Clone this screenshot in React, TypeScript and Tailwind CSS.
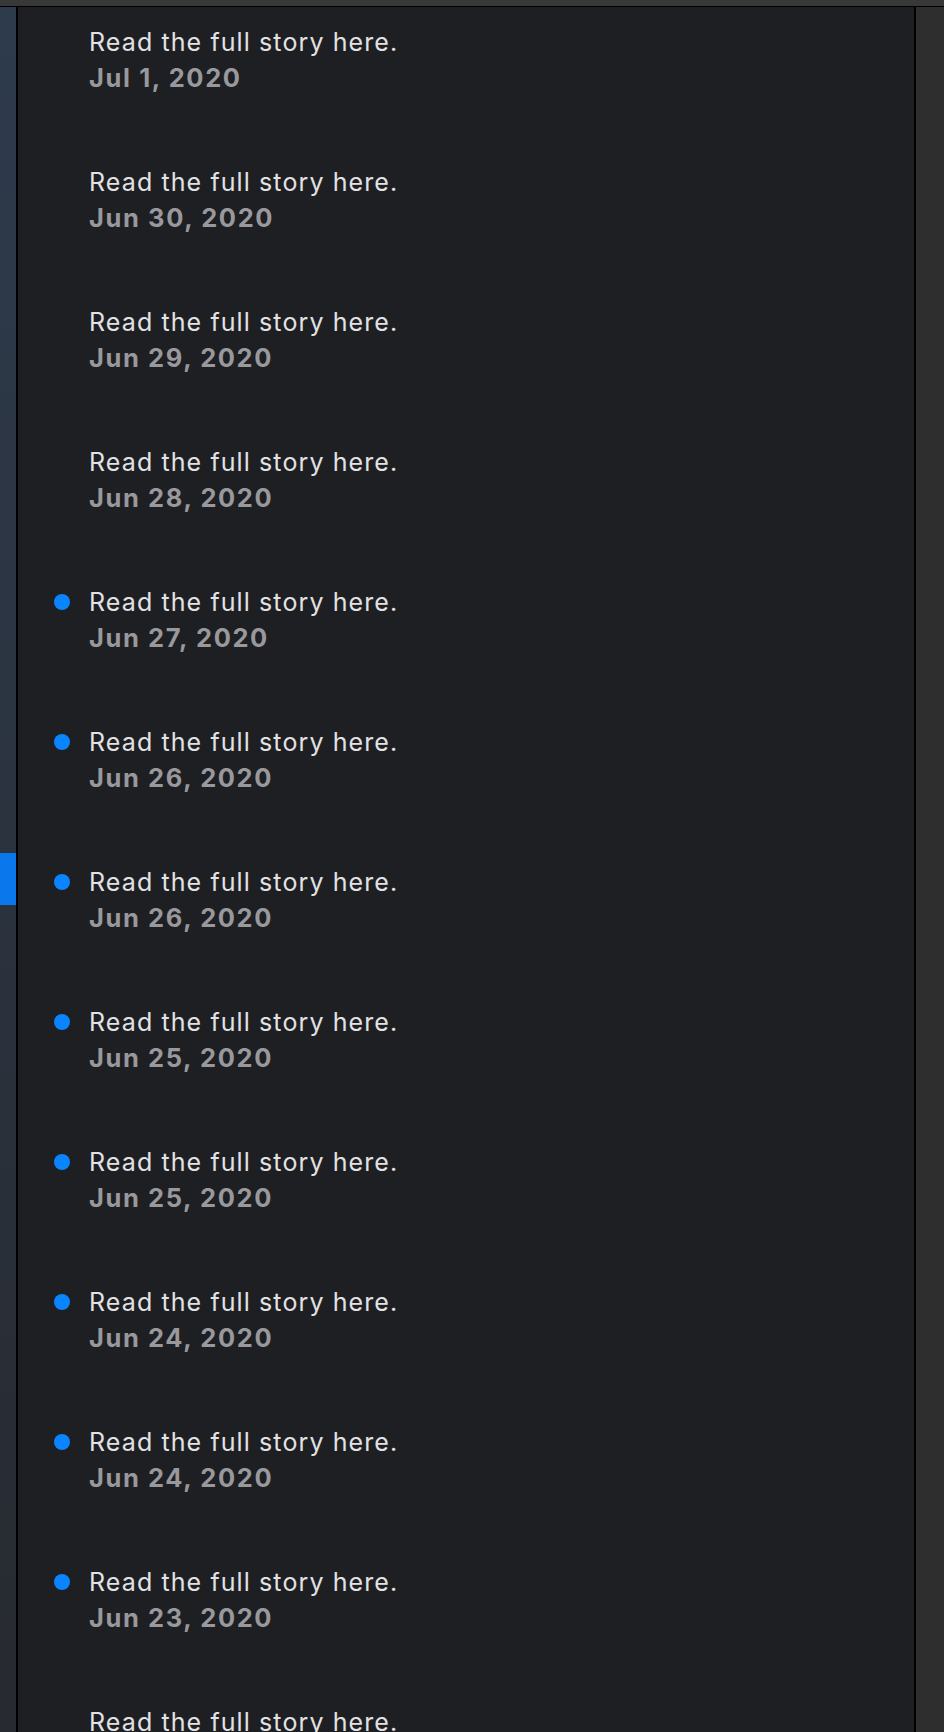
const ITEMS = [
  { date: "Jul 1, 2020", unread: false },
  { date: "Jun 30, 2020", unread: false },
  { date: "Jun 29, 2020", unread: false },
  { date: "Jun 28, 2020", unread: false },
  { date: "Jun 27, 2020", unread: true },
  { date: "Jun 26, 2020", unread: true },
  { date: "Jun 26, 2020", unread: true },
  { date: "Jun 25, 2020", unread: true },
  { date: "Jun 25, 2020", unread: true },
  { date: "Jun 24, 2020", unread: true },
  { date: "Jun 24, 2020", unread: true },
  { date: "Jun 23, 2020", unread: true },
  { date: "Jun 23, 2020", unread: false },
];

function StoryRow({ date, unread }: { date: string; unread: boolean }) {
  return (
    <div className="flex h-[140px] shrink-0 pl-[36px]">
      <div className="flex h-[34px] w-[16px] items-center">
        {unread && <span className="h-[16px] w-[16px] rounded-full bg-[#0a84ff]" />}
      </div>
      <div className="ml-[19px] flex flex-col">
        <span className="text-[25px] leading-[34px] tracking-[1.1px] text-[#e2e2e4]">Read the full story here.</span>
        <span className="text-[25.5px] font-bold leading-[38px] tracking-[1.6px] text-[#98989d]">{date}</span>
      </div>
    </div>
  );
}

export default function App() {
  return (
    <div className="flex h-[1732px] w-[944px] flex-col overflow-hidden bg-[#1e1f22] font-['Inter',sans-serif]">
      <div className="h-[7px] shrink-0 border-b border-black bg-[#383839]" />
      <div className="flex min-h-0 flex-1">
        <div className="flex w-[18px] shrink-0 flex-col border-r-2 border-black bg-gradient-to-b from-[#2e3b4d] to-[#272a30]">
          <div className="mt-[846px] h-[52px] bg-[#0a78ec]" />
        </div>
        <div className="flex min-w-0 flex-1 flex-col overflow-hidden pt-[18px]">
          {ITEMS.map((item, i) => (
            <StoryRow key={i} date={item.date} unread={item.unread} />
          ))}
        </div>
        <div className="w-[30px] shrink-0 border-l-2 border-black bg-[#2e2e2e]" />
      </div>
    </div>
  );
}
